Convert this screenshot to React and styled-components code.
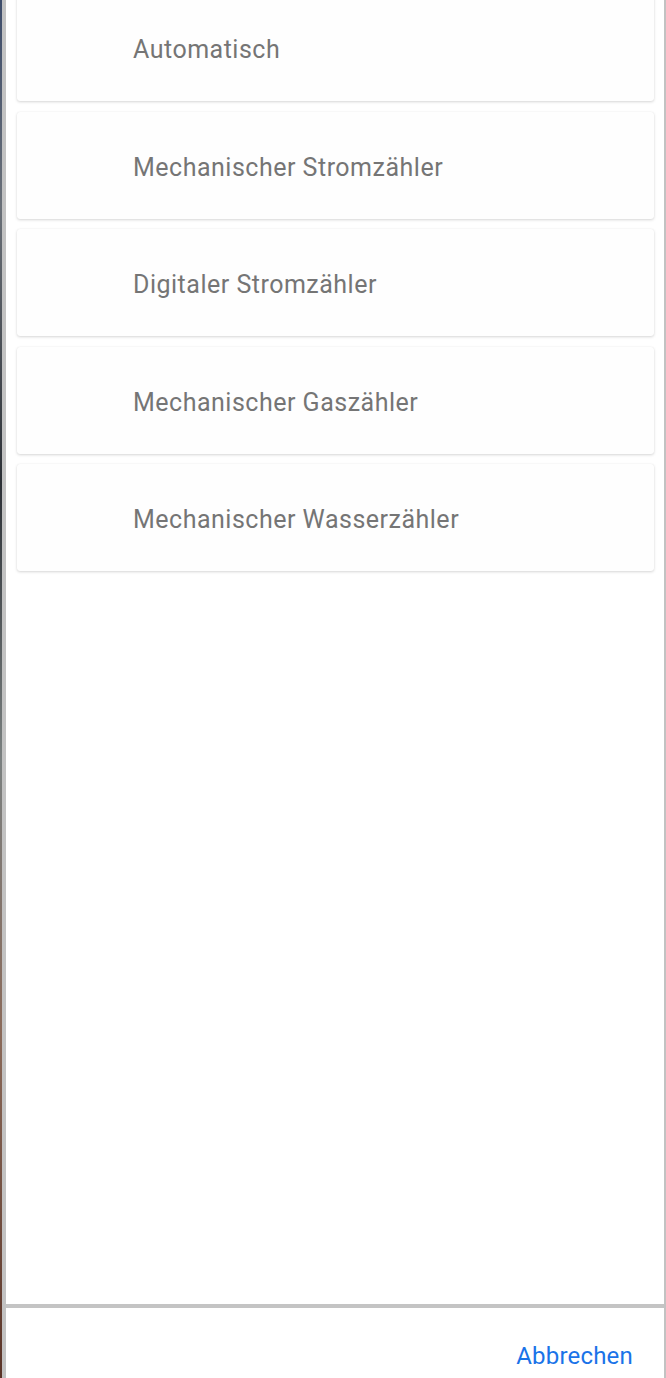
import styled, { createGlobalStyle } from "styled-components"

const GlobalStyle = createGlobalStyle`
    html, body {
        margin: 0;
        padding: 0;
        height: 100%;
        overflow: hidden;
    }
    #root {
        height: 100%;
    }
`

const meterTypes = [
    "Automatisch",
    "Mechanischer Stromzähler",
    "Digitaler Stromzähler",
    "Mechanischer Gaszähler",
    "Mechanischer Wasserzähler",
]

export default function App(){
    return (
        <>
            <GlobalStyle />
            <Screen>
                <Backdrop />
                <Dialog>
                    <OptionList>
                        {meterTypes.map(type => (
                            <OptionCard key={type}>{type}</OptionCard>
                        ))}
                    </OptionList>
                    <Footer>
                        <CancelButton>Abbrechen</CancelButton>
                    </Footer>
                </Dialog>
            </Screen>
        </>
    )
}

const Screen = styled.div`
    height: 1378px;
    display: flex;
    overflow: hidden;
`

const Backdrop = styled.div`
    width: 2px;
    flex-shrink: 0;
    background: linear-gradient(
        to bottom,
        #3d4c6a 0%,
        #6a7078 15%,
        #2c3036 35%,
        #7a8080 55%,
        #8a6a5a 75%,
        #5a3428 100%
    );
`

const Dialog = styled.div`
    flex: 1;
    display: flex;
    flex-direction: column;
    background-color: #ffffff;
    border-left: 4px solid #c2c2c2;
    border-right: 2px solid #c2c2c2;
`

const OptionList = styled.div`
    flex: 1;
    display: flex;
    flex-direction: column;
    gap: 10.5px;
    padding: 0 10px 0 11px;
    margin-top: -6px;
    border-bottom: 4px solid #c4c4c4;
`

const OptionCard = styled.div`
    height: 107px;
    flex-shrink: 0;
    display: flex;
    align-items: center;
    padding-left: 116px;
    padding-top: 4px;
    box-sizing: border-box;
    background-color: #fefefe;
    border-radius: 3px;
    box-shadow: 0 1px 3px rgba(0, 0, 0, 0.16), 0 0 1px rgba(0, 0, 0, 0.08);
    font-family: Roboto, "Noto Sans", sans-serif;
    font-size: 25px;
    letter-spacing: 0.5px;
    color: #757575;
`

const Footer = styled.div`
    height: 70px;
    display: flex;
    justify-content: flex-end;
    align-items: flex-end;
    padding: 0 31px 8px 0;
    box-sizing: border-box;
`

const CancelButton = styled.button`
    border: 0;
    padding: 0;
    background: none;
    font-family: Roboto, "Noto Sans", sans-serif;
    font-size: 24px;
    letter-spacing: 0.2px;
    color: #1a73e8;
`
